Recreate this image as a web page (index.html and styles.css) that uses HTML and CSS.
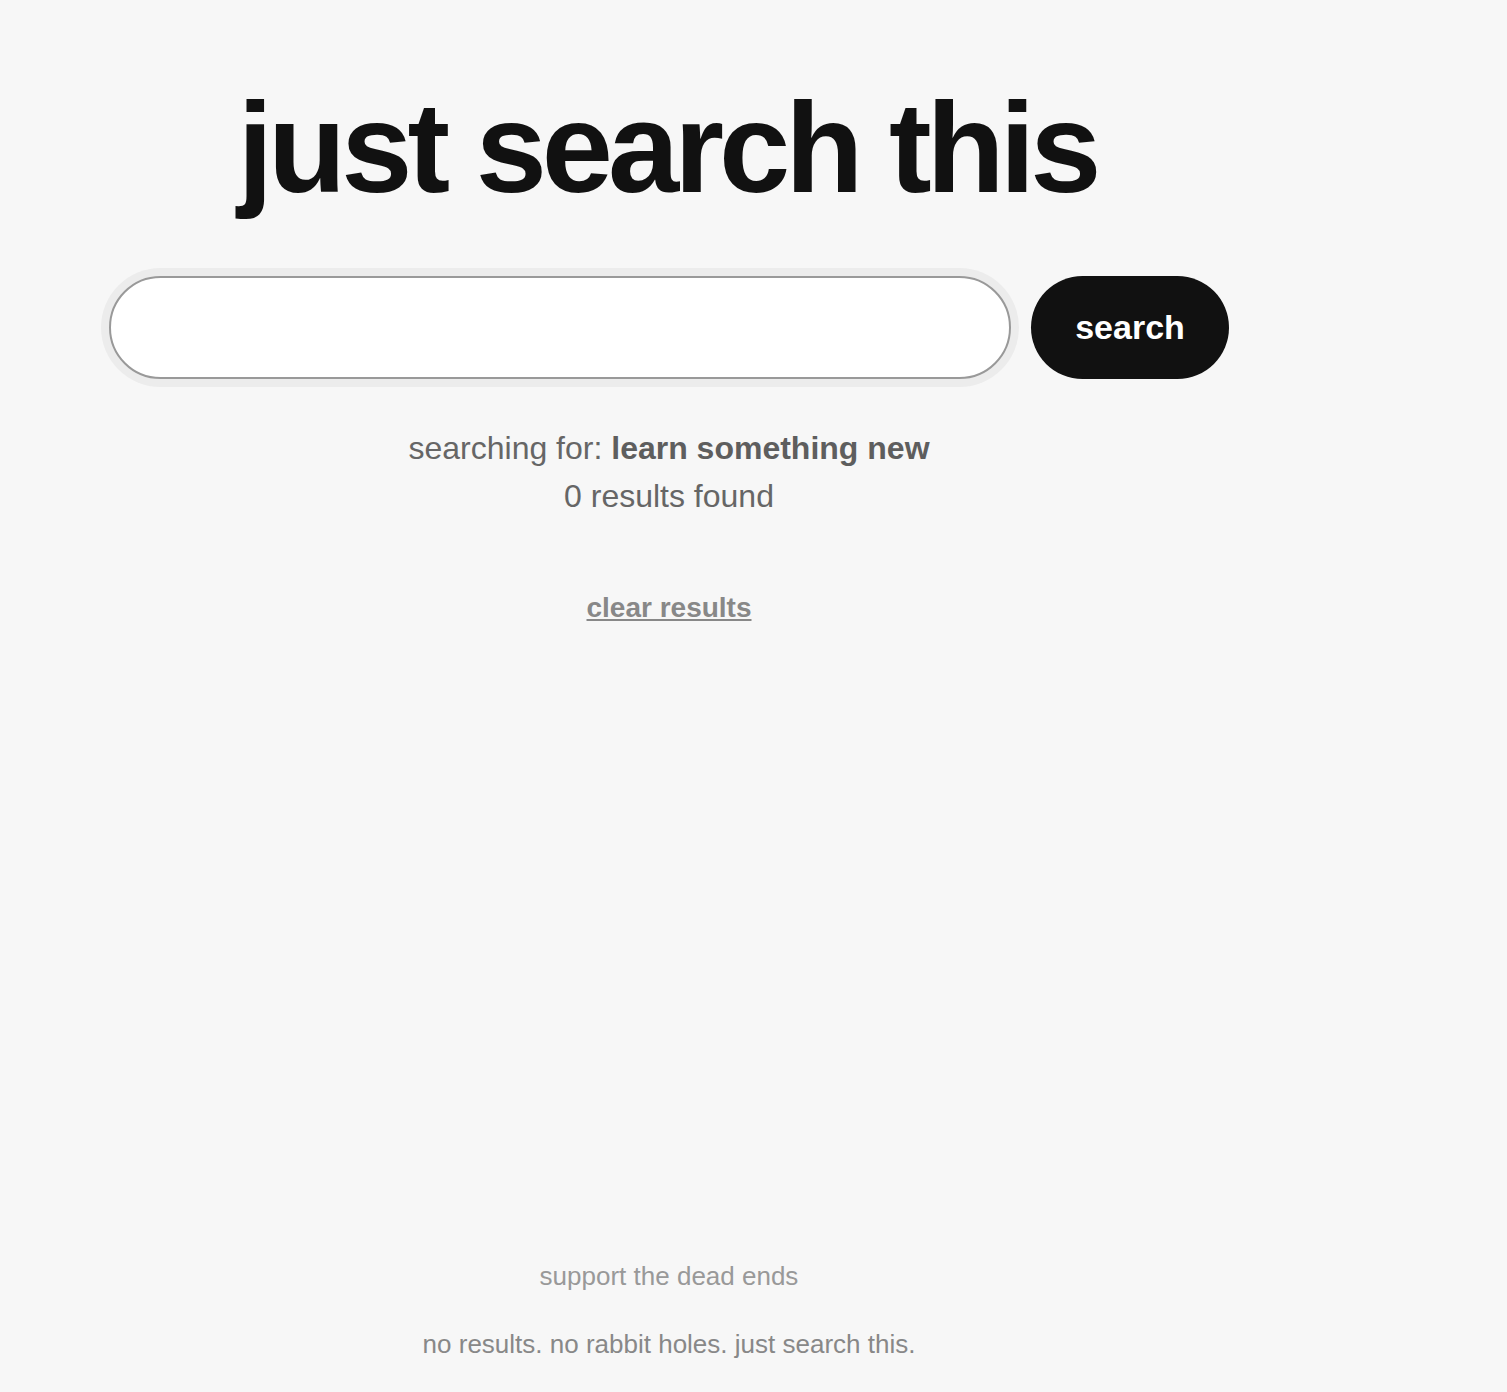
FILE: index.html
```html
<!DOCTYPE html>
<html lang="en">
<head>
<meta charset="utf-8">
<title>just search this</title>
<link rel="stylesheet" href="styles.css">
</head>
<body>
<div class="page">
  <h1 class="title">just search this</h1>
  <form class="search-row" onsubmit="return false">
    <input class="search-input" type="text" aria-label="search">
    <button class="search-btn" type="submit">search</button>
  </form>
  <div class="status">
    <p class="status-line">searching for: <strong>learn something new</strong></p>
    <p class="status-line">0 results found</p>
  </div>
  <div class="clear"><a href="#" class="clear-link">clear results</a></div>
  <footer class="footer">
    <p class="support">support the dead ends</p>
    <p class="tagline">no results. no rabbit holes. just search this.</p>
  </footer>
</div>
</body>
</html>
```
FILE: styles.css
```css
html, body {
  margin: 0;
  padding: 0;
  background: #f7f7f7;
}
body {
  font-family: "Liberation Sans", Arial, sans-serif;
  color: #111;
}
.page {
  width: 1322px;
  margin-left: 8px;
  min-height: 100vh;
  box-sizing: border-box;
  padding-top: 84px;
  padding-bottom: 28px;
  display: flex;
  flex-direction: column;
  align-items: center;
  text-align: center;
}
.title {
  margin: 0;
  padding-right: 4px;
  font-size: 128px;
  line-height: 128px;
  font-weight: 700;
  letter-spacing: -5px;
  color: #111;
}
.search-row {
  margin: 64px 0 0;
  display: flex;
  gap: 20px;
  width: 1120px;
}
.search-input {
  width: 902px;
  height: 103px;
  box-sizing: border-box;
  border: 2px solid #999;
  border-radius: 52px;
  background: #fff;
  box-shadow: 0 0 0 8px #ececec;
  padding: 0 40px;
  font-family: inherit;
  font-size: 32px;
  outline: none;
}
.search-btn {
  width: 198px;
  height: 103px;
  border: 0;
  border-radius: 52px;
  background: #111;
  color: #fff;
  font-family: inherit;
  font-size: 34px;
  font-weight: 700;
  padding: 0;
  cursor: pointer;
}
.status {
  margin-top: 45px;
  color: #666;
  font-size: 32px;
  line-height: 48px;
}
.status-line {
  margin: 0;
}
.status-line strong {
  color: #5e5e5e;
}
.clear {
  margin-top: 67px;
  font-size: 28px;
  line-height: 42px;
}
.clear-link {
  color: #888;
  font-weight: 700;
  text-decoration: underline;
}
.footer {
  margin-top: auto;
  font-size: 26px;
  line-height: 39px;
}
.support {
  margin: 0;
  color: #999;
}
.tagline {
  margin: 29px 0 0;
  color: #888;
}
```
